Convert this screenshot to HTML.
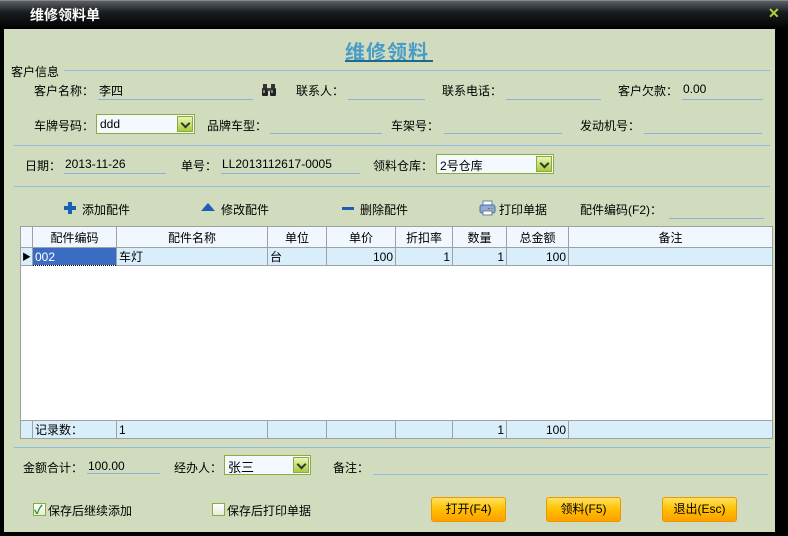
<!DOCTYPE html>
<html><head><meta charset="utf-8"><style>
*{margin:0;padding:0;box-sizing:border-box}
body{width:788px;height:536px;background:#000;position:relative;overflow:hidden;font-family:"Liberation Sans","Noto Sans CJK SC","WenQuanYi Zen Hei",sans-serif;font-size:12px;color:#000}
.a{position:absolute;white-space:nowrap}
#title{left:0;top:0;width:788px;height:29px;background:linear-gradient(#5a6066,#1a1d20 40%,#000);border-top:1px solid #888}
#body{left:4px;top:29px;width:771px;height:503px;background:#d0dcbd}
.hl{position:absolute;height:1px;background:#8fb9e6}
.ul{position:absolute;height:1px;background:#8fb0d8}
.combo{position:absolute;background:#f3f9ff;border:1px solid #8aac3a;height:20px;padding:2px 3px;font-size:12px}
.combo i{position:absolute;right:1px;top:1px;width:16px;height:16px;background:linear-gradient(#eaf5b0,#a8cd3c);border:1px solid #8aa848}
.combo i:after{content:"";position:absolute;left:4px;top:3px;width:5px;height:5px;border-right:2px solid #333;border-bottom:2px solid #333;transform:rotate(45deg)}
table{border-collapse:collapse;table-layout:fixed}
td{border:1px solid #a0a0a0;height:15px;padding:0 2px;font-size:12px;overflow:hidden}
.btn{position:absolute;width:75px;height:25px;border:1px solid #e79a00;border-radius:3px;background:linear-gradient(#ffe060,#ffc000 50%,#ff9e00);text-align:center;line-height:23px;font-size:12px}
.cb{position:absolute;width:13px;height:13px;border:1px solid #8aac3a;background:linear-gradient(#fff,#e8e8e0)}
</style></head><body>
<div id="title" class="a"></div>
<div class="a" style="left:30px;top:5px;color:#fff;font-weight:bold;font-size:14px">维修领料单</div>
<div class="a" style="left:768px;top:5px;color:#b4d23c;font-weight:bold;font-size:14px">✕</div>
<div id="body" class="a"></div>

<div class="a" style="left:345px;top:36px;font-size:20px;font-weight:bold;color:#4a9cc8;letter-spacing:1px">维修领料</div>
<div class="a" style="left:345px;top:60px;width:88px;height:2px;background:#1d6a90"></div>

<div class="a" style="left:11px;top:63px">客户信息</div>
<div class="hl" style="left:64px;top:70px;width:706px"></div>

<div class="a" style="left:34px;top:82px">客户名称：</div>
<div class="a" style="left:99px;top:82px">李四</div>
<div class="ul" style="left:98px;top:99px;width:155px"></div>
<svg class="a" style="left:261px;top:83px" width="16" height="14" viewBox="0 0 16 14"><rect x="1" y="5" width="6" height="8" rx="1" fill="#222"/><rect x="9" y="5" width="6" height="8" rx="1" fill="#222"/><rect x="2" y="1" width="4" height="5" fill="#333"/><rect x="10" y="1" width="4" height="5" fill="#333"/><rect x="6" y="5" width="4" height="3" fill="#444"/><rect x="2" y="7" width="2" height="3" fill="#888"/><rect x="10" y="7" width="2" height="3" fill="#888"/></svg>
<div class="a" style="left:296px;top:82px">联系人：</div>
<div class="ul" style="left:348px;top:99px;width:77px"></div>
<div class="a" style="left:442px;top:82px">联系电话：</div>
<div class="ul" style="left:506px;top:99px;width:95px"></div>
<div class="a" style="left:618px;top:82px">客户欠款：</div>
<div class="a" style="left:683px;top:82px">0.00</div>
<div class="ul" style="left:682px;top:99px;width:81px"></div>

<div class="a" style="left:34px;top:117px">车牌号码：</div>
<div class="combo" style="left:96px;top:114px;width:99px">ddd<i></i></div>
<div class="a" style="left:207px;top:117px">品牌车型：</div>
<div class="ul" style="left:270px;top:133px;width:112px"></div>
<div class="a" style="left:391px;top:117px">车架号：</div>
<div class="ul" style="left:444px;top:133px;width:118px"></div>
<div class="a" style="left:580px;top:117px">发动机号：</div>
<div class="ul" style="left:644px;top:133px;width:118px"></div>

<div class="hl" style="left:14px;top:145px;width:756px"></div>

<div class="a" style="left:25px;top:157px">日期：</div>
<div class="a" style="left:65px;top:157px">2013-11-26</div>
<div class="ul" style="left:64px;top:173px;width:102px"></div>
<div class="a" style="left:181px;top:157px">单号：</div>
<div class="a" style="left:222px;top:157px">LL2013112617-0005</div>
<div class="ul" style="left:221px;top:173px;width:139px"></div>
<div class="a" style="left:373px;top:157px">领料仓库：</div>
<div class="combo" style="left:436px;top:154px;width:118px">2号仓库<i></i></div>

<div class="hl" style="left:14px;top:186px;width:756px"></div>

<svg class="a" style="left:64px;top:202px" width="12" height="12" viewBox="0 0 12 12"><rect x="4" y="0" width="4" height="12" fill="#1a5fb4"/><rect x="0" y="4" width="12" height="4" fill="#1a5fb4"/></svg>
<div class="a" style="left:82px;top:201px">添加配件</div>
<div class="a" style="left:201px;top:203px;width:0;height:0;border-left:7px solid transparent;border-right:7px solid transparent;border-bottom:8px solid #1a5fb4"></div>
<div class="a" style="left:221px;top:201px">修改配件</div>
<div class="a" style="left:342px;top:207px;width:12px;height:3px;background:#1a5fb4"></div>
<div class="a" style="left:360px;top:201px">删除配件</div>
<svg class="a" style="left:479px;top:200px" width="17" height="16" viewBox="0 0 17 16"><rect x="4" y="1" width="9" height="5" fill="#fff" stroke="#6a7f9f"/><rect x="1" y="5" width="15" height="8" rx="2" fill="#8fa9d8" stroke="#4f6f9f"/><rect x="4" y="11" width="9" height="4" fill="#fff" stroke="#6a7f9f"/><rect x="9" y="8" width="2" height="1" fill="#e33"/><rect x="12" y="8" width="2" height="1" fill="#3c3"/></svg>
<div class="a" style="left:499px;top:201px">打印单据</div>
<div class="a" style="left:580px;top:201px">配件编码(F2)：</div>
<div class="ul" style="left:669px;top:218px;width:95px"></div>

<div class="a" style="left:20px;top:226px;width:753px;height:210px;background:#fff;border:1px solid #a0a0a0"></div>
<table class="a" style="left:20px;top:226px;width:753px">
<colgroup><col style="width:12px"><col style="width:84px"><col style="width:151px"><col style="width:59px"><col style="width:69px"><col style="width:57px"><col style="width:54px"><col style="width:62px"><col></colgroup>
<tr style="background:#f0f7ff;text-align:center;height:21px"><td style="height:21px"></td><td>配件编码</td><td>配件名称</td><td>单位</td><td>单价</td><td>折扣率</td><td>数量</td><td>总金额</td><td>备注</td></tr>
<tr style="background:#d8effb"><td style="font-size:9px;padding:0 1px">▶</td><td style="background:#3b6cc4;color:#fff;border:1px dotted #000">002</td><td>车灯</td><td>台</td><td style="text-align:right">100</td><td style="text-align:right">1</td><td style="text-align:right">1</td><td style="text-align:right">100</td><td></td></tr>
</table>
<table class="a" style="left:20px;top:420px;width:753px">
<colgroup><col style="width:12px"><col style="width:84px"><col style="width:151px"><col style="width:59px"><col style="width:69px"><col style="width:57px"><col style="width:54px"><col style="width:62px"><col></colgroup>
<tr style="background:#d8effb"><td></td><td>记录数：</td><td>1</td><td></td><td></td><td></td><td style="text-align:right">1</td><td style="text-align:right">100</td><td></td></tr>
</table>

<div class="hl" style="left:14px;top:447px;width:756px"></div>

<div class="a" style="left:23px;top:459px">金额合计：</div>
<div class="a" style="left:88px;top:459px">100.00</div>
<div class="ul" style="left:87px;top:473px;width:73px"></div>
<div class="a" style="left:174px;top:459px">经办人：</div>
<div class="combo" style="left:224px;top:455px;width:87px;font-size:13px;height:20px;padding:1px 3px">张三<i></i></div>
<div class="a" style="left:333px;top:459px">备注：</div>
<div class="hl" style="left:373px;top:474px;width:395px"></div>

<div class="cb" style="left:33px;top:503px"><span style="position:absolute;left:0;top:-3px;color:#2a9a2a;font-size:12px;font-weight:bold">✓</span></div>
<div class="a" style="left:48px;top:502px">保存后继续添加</div>
<div class="cb" style="left:212px;top:503px"></div>
<div class="a" style="left:227px;top:502px">保存后打印单据</div>

<div class="btn" style="left:431px;top:497px">打开(F4)</div>
<div class="btn" style="left:546px;top:497px">领料(F5)</div>
<div class="btn" style="left:662px;top:497px">退出(Esc)</div>
</body></html>
